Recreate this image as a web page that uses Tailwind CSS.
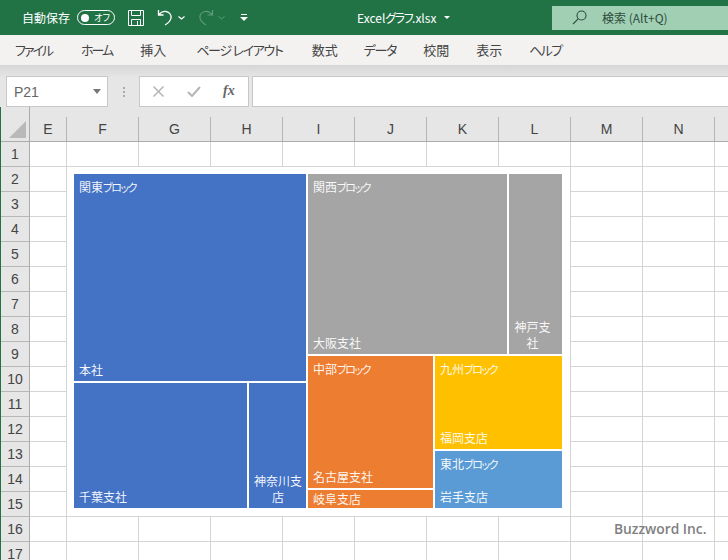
<!DOCTYPE html>
<html lang="ja">
<head>
<meta charset="UTF-8" />
<title>Excelグラフ.xlsx</title>
<script src="https://cdn.jsdelivr.net/npm/@tailwindcss/browser@4"></script>
</head>
<body class="w-[728px] h-[560px] overflow-hidden bg-white font-['Noto_Sans_CJK_JP',sans-serif] [font-feature-settings:'palt']">
  <!-- Title bar -->
  <div class="h-[35px] bg-[#217346] text-white flex items-center text-[12px]">
    <span class="ml-[22px] w-[48px] whitespace-nowrap">自動保存</span>
    <div class="ml-[7px] w-[38px] h-[15px] rounded-full border border-white flex items-center justify-between pl-[3px] pr-[4px]">
      <span class="w-[8px] h-[8px] rounded-full bg-white"></span>
      <span class="text-[9px] leading-none">オフ</span>
    </div>
    <svg class="ml-[13px]" width="16" height="16" viewBox="0 0 16 16" fill="none" stroke="#fff" stroke-width="1"><path d="M.5.5h15v15H.5zM3.5.5v5h9v-5M3.5 15.5v-6h9v6M9.5 11v4.5"/></svg>
    <svg class="ml-[13px]" width="17" height="17" viewBox="0 0 17 17" fill="none" stroke="#fff" stroke-width="1.3"><path d="M1.5 1v5h5M1.5 6C4 3 6.500 2 9 2.500c3.500.8 5.500 3.500 5 6.500-.4 2.500-2.500 5-6 7"/></svg>
    <svg class="ml-[4px]" width="7" height="4" viewBox="0 0 7 4" fill="none" stroke="#fff" stroke-width="1.200"><path d="M.5.5l3 2.500 3-2.500"/></svg>
    <svg class="ml-[12px]" width="17" height="17" viewBox="0 0 17 17" fill="none" stroke="#5f9c7c" stroke-width="1.200"><path d="M15.500 1v5h-5M15.500 6C13 3 10.500 2 8 2.500c-3.500.8-5.500 3.500-5 6.500.4 2.500 2.500 5 6 7"/></svg>
    <svg class="ml-[4px]" width="7" height="4" viewBox="0 0 7 4" fill="none" stroke="#5f9c7c" stroke-width="1"><path d="M.5.5l3 2.500 3-2.500"/></svg>
    <svg class="ml-[15px]" width="8" height="8" viewBox="0 0 8 8"><path d="M1 0h6v1H1z" fill="#fff"/><path d="M0 3h8L4 7z" fill="#fff"/></svg>
    <span class="ml-[109px] w-[82px] whitespace-nowrap">Excel<span class="tracking-[-1.500px]">グラフ</span>.xlsx</span>
    <svg class="ml-[5px]" width="6" height="4" viewBox="0 0 6 4"><path d="M0 0h6L3 3z" fill="#fff"/></svg>
    <div class="ml-[102px] w-[176px] h-[24px] bg-[#a0cfb4] flex items-center text-[#2d4d3b]">
      <svg class="ml-[20px]" width="15" height="15" viewBox="0 0 15 15" fill="none" stroke="#2d4d3b" stroke-width="1.100"><circle cx="9.500" cy="5.500" r="4.500"/><path d="M6.200 8.800L1 14"/></svg>
      <span class="ml-[15px] whitespace-nowrap">検索 (Alt+Q)</span>
    </div>
  </div>

  <!-- Menu -->
  <nav class="h-[30px] bg-[#f3f2f1] flex items-center pl-[15px] gap-[26px] text-[13px] text-[#444]">
    <span class="tracking-[-2px]">ファイル</span>
    <span class="ml-[3px] tracking-[-2px]">ホーム</span>
    <span class="ml-[2px]">挿入</span>
    <span class="ml-[4px] tracking-[-1.300px]">ページ レイアウト</span>
    <span class="ml-[3px]">数式</span>
    <span class="tracking-[-1.300px]">データ</span>
    <span class="ml-[1px]">校閲</span>
    <span class="ml-[1px]">表示</span>
    <span class="ml-[1px] tracking-[-1.600px]">ヘルプ</span>
  </nav>

  <!-- Formula bar -->
  <div class="h-[42px] bg-gradient-to-b from-[#d6d6d6] to-[#e6e6e6] to-30% pt-[11px] pl-[6px] flex items-start">
    <div class="w-[102px] h-[31px] bg-white border border-[#c8c8c8] flex items-center justify-between pl-[7px] pr-[6px] pt-[1px] text-[14px] text-[#666] font-['Liberation_Sans',sans-serif]">
      <span>P21</span>
      <svg class="-mt-[1px]" width="8" height="5" viewBox="0 0 8 5"><path d="M0 0h8L4 5z" fill="#777"/></svg>
    </div>
    <div class="w-[31px] h-[31px] flex flex-col items-center justify-center gap-[2px]">
      <span class="w-[2px] h-[2px] bg-[#aaa]"></span>
      <span class="w-[2px] h-[2px] bg-[#aaa]"></span>
      <span class="w-[2px] h-[2px] bg-[#aaa]"></span>
    </div>
    <div class="w-[110px] h-[31px] bg-white border border-[#c8c8c8] flex items-center text-[#aaa]">
      <svg class="ml-[13px]" width="11" height="11" viewBox="0 0 11 11" fill="none" stroke="#b5b5b5" stroke-width="1.500"><path d="M.5.500l10 10M10.500.500l-10 10"/></svg>
      <svg class="ml-[23px]" width="14" height="11" viewBox="0 0 14 11" fill="none" stroke="#b5b5b5" stroke-width="2"><path d="M1 6l4 4 8-9"/></svg>
      <span class="ml-[22px] -mt-[2px] text-[14px] leading-none italic font-bold text-[#666] font-['Liberation_Serif',serif]">fx</span>
    </div>
    <div class="ml-[3px] flex-1 h-[31px] bg-white border border-[#c8c8c8] border-r-0"></div>
  </div>

  <!-- Sheet -->
  <div class="relative border-l border-[#217346] h-[453px] overflow-hidden">
    <div class="h-[35px] flex bg-[#e6e6e6] border-b border-[#ababab] text-[14px] text-[#444] font-['Liberation_Sans',sans-serif]">
      <div class="w-[29px] shrink-0 relative border-r border-[#ababab]">
        <svg class="absolute left-[8px] top-[14px]" width="17" height="17" viewBox="0 0 17 17"><path d="M17 0v17H0z" fill="#b9b9b9"/></svg>
      </div>
      <div class="w-[37px] shrink-0 mt-[10px] border-r border-[#b5b5b5] flex items-center justify-center">E</div>
      <div class="w-[72px] shrink-0 mt-[10px] border-r border-[#b5b5b5] flex items-center justify-center">F</div>
      <div class="w-[72px] shrink-0 mt-[10px] border-r border-[#b5b5b5] flex items-center justify-center">G</div>
      <div class="w-[72px] shrink-0 mt-[10px] border-r border-[#b5b5b5] flex items-center justify-center">H</div>
      <div class="w-[72px] shrink-0 mt-[10px] border-r border-[#b5b5b5] flex items-center justify-center">I</div>
      <div class="w-[72px] shrink-0 mt-[10px] border-r border-[#b5b5b5] flex items-center justify-center">J</div>
      <div class="w-[72px] shrink-0 mt-[10px] border-r border-[#b5b5b5] flex items-center justify-center">K</div>
      <div class="w-[72px] shrink-0 mt-[10px] border-r border-[#b5b5b5] flex items-center justify-center">L</div>
      <div class="w-[72px] shrink-0 mt-[10px] border-r border-[#b5b5b5] flex items-center justify-center">M</div>
      <div class="w-[72px] shrink-0 mt-[10px] border-r border-[#b5b5b5] flex items-center justify-center">N</div>
      <div class="w-[72px] shrink-0 mt-[10px] border-r border-[#b5b5b5]"></div>
    </div>
    <div id="rows"></div>

    <!-- Chart -->
    <div class="absolute left-[66px] top-[60px] w-[503px] h-[349px] bg-white pl-[7px] pt-[7px] text-[12px] leading-[16px] text-white/95">
      <div class="w-[488px] h-[334px] flex gap-[2px]">
        <div class="w-[232px] flex flex-col gap-[2px]">
          <div class="h-[207px] bg-[#4472c4] flex flex-col justify-between pl-[5px] pt-[5px] pb-[3px]">
            <span>関東<span class="text-[11px] tracking-[-1.500px]">ブロック</span></span><span>本社</span>
          </div>
          <div class="flex-1 flex gap-[2px]">
            <div class="w-[173px] bg-[#4472c4] flex flex-col justify-end pl-[5px] pb-[3px]"><span>千葉支社</span></div>
            <div class="flex-1 bg-[#4472c4] flex flex-col justify-end text-center pl-[1px] pb-[3px]"><span>神奈川支<br>店</span></div>
          </div>
        </div>
        <div class="flex-1 flex flex-col gap-[2px]">
          <div class="h-[180px] flex gap-[2px]">
            <div class="w-[199px] bg-[#a5a5a5] flex flex-col justify-between pl-[5px] pt-[5px] pb-[3px]">
              <span>関西<span class="text-[11px] tracking-[-1.500px]">ブロック</span></span><span>大阪支社</span>
            </div>
            <div class="flex-1 bg-[#a5a5a5] flex flex-col justify-end text-center pr-[6px] pb-[3px]"><span>神戸支<br>社</span></div>
          </div>
          <div class="flex-1 flex gap-[2px]">
            <div class="w-[125px] flex flex-col gap-[2px]">
              <div class="flex-1 bg-[#ed7d31] flex flex-col justify-between pl-[5px] pt-[5px] pb-[3px]">
                <span>中部<span class="text-[11px] tracking-[-1.500px]">ブロック</span></span><span>名古屋支社</span>
              </div>
              <div class="h-[18px] bg-[#ed7d31] pl-[5px] leading-[18px]">岐阜支店</div>
            </div>
            <div class="flex-1 flex flex-col gap-[2px]">
              <div class="h-[93px] bg-[#ffc000] flex flex-col justify-between pl-[5px] pt-[5px] pb-[3px]">
                <span>九州<span class="text-[11px] tracking-[-1.500px]">ブロック</span></span><span>福岡支店</span>
              </div>
              <div class="flex-1 bg-[#5b9bd5] flex flex-col justify-between pl-[5px] pt-[5px] pb-[3px]">
                <span>東北<span class="text-[11px] tracking-[-1.500px]">ブロック</span></span><span>岩手支店</span>
              </div>
            </div>
          </div>
        </div>
      </div>
    </div>

    <span class="absolute left-[613px] top-[412px] text-[13.800px] leading-[20px] font-semibold text-[#7f7f7f] font-['Open_Sans',sans-serif] whitespace-nowrap">Buzzword Inc.</span>
  </div>

  <script>
    // 行番号と罫線のセルを並べる
    var html = '';
    for (var r = 1; r <= 17; r++) {
      html += '<div class="h-[25px] flex">';
      html += '<div class="w-[29px] shrink-0 bg-[#e6e6e6] border-r border-b border-r-[#ababab] border-b-[#b8b8b8] flex items-center justify-center text-[14px] text-[#444] font-[\'Liberation_Sans\',sans-serif]">' + r + '</div>';
      html += '<div class="w-[37px] shrink-0 border-r border-b border-[#d4d4d4]"></div>';
      for (var c = 0; c < 10; c++) {
        html += '<div class="w-[72px] shrink-0 border-r border-b border-[#d4d4d4]"></div>';
      }
      html += '</div>';
    }
    document.getElementById('rows').innerHTML = html;
  </script>
</body>
</html>
